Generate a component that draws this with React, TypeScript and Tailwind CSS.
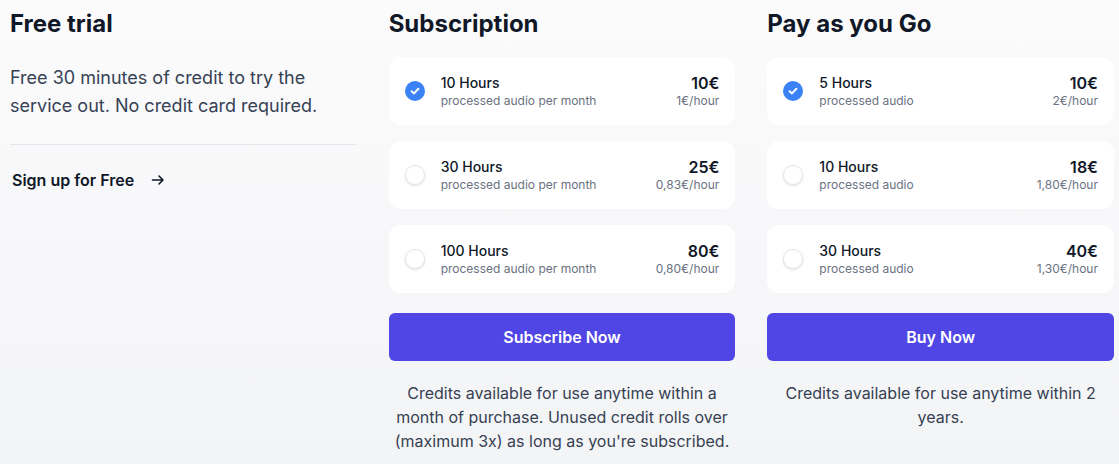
const subscriptionPlans = [
  { hours: '10 Hours', note: 'processed audio per month', price: '10€', rate: '1€/hour', checked: true },
  { hours: '30 Hours', note: 'processed audio per month', price: '25€', rate: '0,83€/hour', checked: false },
  { hours: '100 Hours', note: 'processed audio per month', price: '80€', rate: '0,80€/hour', checked: false },
]

const paygPlans = [
  { hours: '5 Hours', note: 'processed audio', price: '10€', rate: '2€/hour', checked: true },
  { hours: '10 Hours', note: 'processed audio', price: '18€', rate: '1,80€/hour', checked: false },
  { hours: '30 Hours', note: 'processed audio', price: '40€', rate: '1,30€/hour', checked: false },
]

type Plan = (typeof subscriptionPlans)[number]

function Radio({ checked }: { checked: boolean }) {
  if (checked) {
    return (
      <span className="flex h-5 w-5 shrink-0 items-center justify-center rounded-full bg-[#3b82f6]">
        <svg viewBox="0 0 12 12" className="h-3 w-3" fill="none">
          <path d="M2.6 6.2 L5 8.4 L9.4 3.8" stroke="white" strokeWidth="2" strokeLinecap="round" strokeLinejoin="round" />
        </svg>
      </span>
    )
  }
  return <span className="h-5 w-5 shrink-0 rounded-full border border-gray-200 bg-white shadow-sm" />
}

function PlanCard({ plan }: { plan: Plan }) {
  return (
    <div className="flex items-center rounded-xl bg-white px-4 py-4">
      <Radio checked={plan.checked} />
      <div className="ml-4 flex-1">
        <p className="text-sm leading-5 font-medium text-gray-900">{plan.hours}</p>
        <p className="text-xs leading-4 text-gray-500">{plan.note}</p>
      </div>
      <div className="text-right">
        <p className="text-base leading-5 font-semibold text-gray-900">{plan.price}</p>
        <p className="text-xs leading-4 text-gray-500">{plan.rate}</p>
      </div>
    </div>
  )
}

function PlanColumn({ title, plans, cta, footer }: { title: string; plans: Plan[]; cta: string; footer: string }) {
  return (
    <div>
      <h2 className="text-2xl leading-8 font-bold text-gray-900">{title}</h2>
      <div className="mt-[17px] flex flex-col gap-4">
        {plans.map((p) => (
          <PlanCard key={p.hours} plan={p} />
        ))}
      </div>
      <button className="mt-5 h-12 w-full rounded-md bg-[#4f46e5] text-base font-semibold text-white">{cta}</button>
      <p className="mt-5 text-center text-base leading-6 text-gray-700">{footer}</p>
    </div>
  )
}

export default function App() {
  return (
    <div className="min-h-[464px] bg-linear-to-b from-[#fbfbfc] to-[#f3f4f6] pt-2 pl-[10px] pr-[5px]" style={{ fontFamily: 'Inter, "Noto Sans", sans-serif' }}>
      <div className="grid grid-cols-3 gap-8">
        {/* Free trial */}
        <div>
          <h2 className="text-2xl leading-8 font-bold text-gray-900">Free trial</h2>
          <p className="mt-6 text-lg leading-7 text-gray-700">Free 30 minutes of credit to try the service out. No credit card required.</p>
          <div className="mt-6 border-t border-gray-200 pt-[23px]">
            <a href="#" className="ml-[2px] inline-flex items-center gap-4 text-base leading-6 font-semibold text-gray-900">
              Sign up for Free
              <svg viewBox="0 0 16 16" className="h-4 w-4" fill="none">
                <path d="M2.5 8h10.5M9 4l4 4-4 4" stroke="currentColor" strokeWidth="1.6" strokeLinecap="round" strokeLinejoin="round" />
              </svg>
            </a>
          </div>
        </div>

        <PlanColumn
          title="Subscription"
          plans={subscriptionPlans}
          cta="Subscribe Now"
          footer="Credits available for use anytime within a month of purchase. Unused credit rolls over (maximum 3x) as long as you're subscribed."
        />
        <PlanColumn
          title="Pay as you Go"
          plans={paygPlans}
          cta="Buy Now"
          footer="Credits available for use anytime within 2 years."
        />
      </div>
    </div>
  )
}
